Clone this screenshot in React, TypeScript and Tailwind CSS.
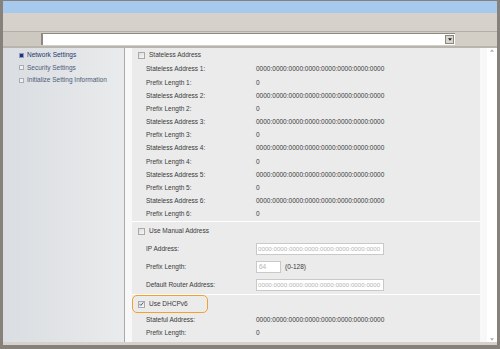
import React from 'react';

const font = { fontFamily: '"Liberation Sans", Arial, sans-serif' };

const Checkbox = ({ checked = false }: { checked?: boolean }) => (
  <span className="w-[7px] h-[7px] border border-[#a9a9a9] bg-gradient-to-br from-[#dcdcdc] to-[#f8f8f8] flex items-center justify-center shrink-0">
    {checked && (
      <svg viewBox="0 0 8 8" className="w-[6px] h-[6px]">
        <path d="M1 4.2 L3 6.2 L7 1.5" fill="none" stroke="#2c3f78" strokeWidth="1.3" />
      </svg>
    )}
  </span>
);

const Row = ({ label, value }: { label: string; value: string }) => (
  <div className="h-[13.2px] flex items-center pl-[14px]">
    <span className="w-[110px] text-[#3a3a3a]">{label}</span>
    <span className="text-[#3a3a3a]">{value}</span>
  </div>
);

const InputRow = ({ label, children }: { label: string; children: React.ReactNode }) => (
  <div className="h-[18px] flex items-center pl-[14px]">
    <span className="w-[110px] text-[#3a3a3a]">{label}</span>
    {children}
  </div>
);

const zeros = '0000:0000:0000:0000:0000:0000:0000:0000';

export default function App() {
  const stateless = [1, 2, 3, 4, 5, 6];
  return (
    <div className="w-[500px] h-[349px] bg-[#86817a] pt-[1px] px-[3px] pb-[4px] text-[6.5px] leading-none" style={font}>
      <div className="w-full h-full flex flex-col bg-[#d6d2cb]">
        <div className="h-[12px] bg-[#a7c9ee]" />
        <div className="h-[19px] bg-[#d6d2cb] border-b border-[#b3afa8]" />
        <div className="h-[16px] flex items-stretch bg-[#d3cfc7] border-b-2 border-[#b9b5ae]">
          <div className="w-[38px] bg-[#cdc9c1]" />
          <div className="w-[414px] my-[1px] bg-white border-l-2 border-t border-[#8d8982] flex justify-end items-center pr-[1px]">
            <span className="w-[9px] h-[9px] bg-[#d8d5cf] border border-[#8a867f] flex items-center justify-center">
              <svg viewBox="0 0 6 4" className="w-[4px] h-[3px]">
                <path d="M0 0 L6 0 L3 4 Z" fill="#222" />
              </svg>
            </span>
          </div>
        </div>
        <div className="flex-1 flex min-h-0">
          <aside className="w-[122px] bg-gradient-to-r from-[#dadde1] to-[#e9ebec] border-r border-[#a9a9a9] pt-[1px] pl-[16px]">
            {[
              { t: 'Network Settings', active: true },
              { t: 'Security Settings', active: false },
              { t: 'Initialize Setting Information', active: false },
            ].map((item) => (
              <div key={item.t} className="h-[12.5px] flex items-center gap-[3px]">
                <span
                  className={
                    item.active
                      ? 'w-[5px] h-[5px] bg-[#23356e] border border-[#8a9bc8]'
                      : 'w-[5px] h-[5px] border border-[#a8adb8] bg-[#eef0f2]'
                  }
                />
                <span className={item.active ? 'text-[#26366b]' : 'text-[#4d5a7a]'}>{item.t}</span>
              </div>
            ))}
          </aside>
          <main className="flex-1 flex bg-[#f8f8f8] min-w-0">
            <div className="flex-1 pl-[7px] pr-[7px] overflow-hidden">
              <div className="bg-[#ebebeb] h-full overflow-hidden">
                <section className="border-b border-white">
                  <div className="h-[15px] flex items-center gap-[4px] pl-[6px]">
                    <Checkbox />
                    <span className="text-[#3a3a3a]">Stateless Address</span>
                  </div>
                  {stateless.map((n) => (
                    <React.Fragment key={n}>
                      <Row label={`Stateless Address ${n}:`} value={zeros} />
                      <Row label={`Prefix Length ${n}:`} value="0" />
                    </React.Fragment>
                  ))}
                </section>
                <section className="border-b border-white">
                  <div className="h-[18px] flex items-center gap-[4px] pl-[6px]">
                    <Checkbox />
                    <span className="text-[#3a3a3a]">Use Manual Address</span>
                  </div>
                  <InputRow label="IP Address:">
                    <span className="w-[128px] h-[12px] bg-white border border-[#c9c9c9] text-[#b5b5b5] text-[6.2px] pl-[1px] flex items-center overflow-hidden whitespace-nowrap">{zeros}</span>
                  </InputRow>
                  <InputRow label="Prefix Length:">
                    <span className="w-[25px] h-[12px] bg-white border border-[#c9c9c9] text-[#b5b5b5] pl-[2px] flex items-center">64</span>
                    <span className="ml-[4px] text-[#3a3a3a]">(0-128)</span>
                  </InputRow>
                  <InputRow label="Default Router Address:">
                    <span className="w-[128px] h-[12px] bg-white border border-[#c9c9c9] text-[#b5b5b5] text-[6.2px] pl-[1px] flex items-center overflow-hidden whitespace-nowrap">{zeros}</span>
                  </InputRow>
                </section>
                <section>
                  <div className="h-[18px] w-[76px] flex items-center gap-[4px] pl-[5px] border border-[#f4a02e] rounded-[5px]">
                    <Checkbox checked />
                    <span className="text-[#3a3a3a]">Use DHCPv6</span>
                  </div>
                  <Row label="Stateful Address:" value={zeros} />
                  <Row label="Prefix Length:" value="0" />
                </section>
              </div>
            </div>
            <div className="w-[10px] bg-white flex flex-col justify-between items-center py-[1px]">
              <svg viewBox="0 0 6 4" className="w-[4px] h-[3px]">
                <path d="M0 4 L6 4 L3 0 Z" fill="#b0b0b0" />
              </svg>
              <svg viewBox="0 0 6 4" className="w-[4px] h-[3px]">
                <path d="M0 0 L6 0 L3 4 Z" fill="#b0b0b0" />
              </svg>
            </div>
          </main>
        </div>
        <div className="h-[3px] bg-[#d6d2cb]" />
      </div>
    </div>
  );
}
